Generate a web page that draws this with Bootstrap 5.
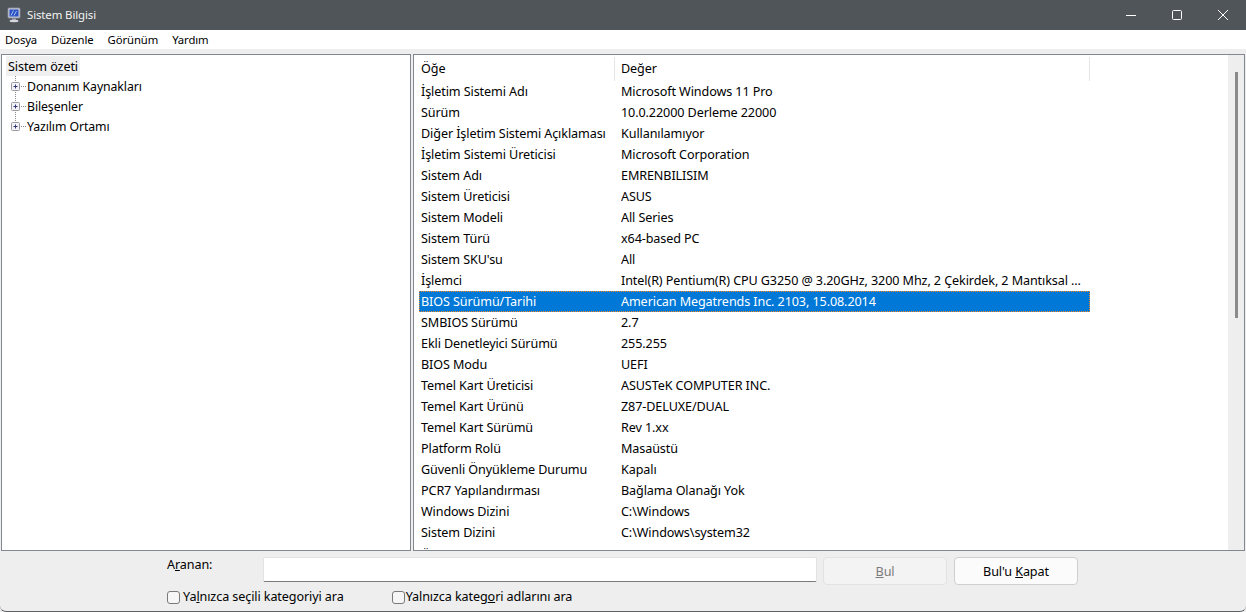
<!DOCTYPE html>
<html lang="tr"><head><meta charset="utf-8"><title>Sistem Bilgisi</title>
<link href="https://cdn.jsdelivr.net/npm/bootstrap@5.3.0/dist/css/bootstrap.min.css" rel="stylesheet">
<style>
html,body{height:612px;overflow:hidden}
body{font-family:"Noto Sans","Open Sans",sans-serif;font-size:12.6px;line-height:16px;color:#000;background:#eee;letter-spacing:-.1px}
.win{width:1246px;height:612px;display:flex;flex-direction:column;border-bottom:1px solid #5e6266;border-radius:0 0 6px 6px;overflow:hidden;background:#eee}
.tbar{height:30px;background:#4f5558;color:#fff;padding-left:7px;flex:none}
.tbar .ttl{margin-left:6px;color:#f4f4f4;font-size:11.4px}
.wbtn{width:46px;height:30px;display:flex;align-items:center;justify-content:center}
.mbar{height:19px;background:#fff;padding-left:5px;gap:14px;font-size:11.3px;flex:none}
.panes{height:497px;margin:5px 1px 0 1px;gap:2px;flex:none}
.pane{background:#fff;border:1px solid #828790;height:497px;overflow:hidden}
.ltree{width:410px;flex:none;padding:1px 0 0 4px}
.sel0{display:block;width:74px;background:#f0f0f0;padding:3px 0 1px 2px;line-height:16px;height:20px;white-space:nowrap}
.tnode{height:20px;display:flex;align-items:center;padding-left:5px;font-size:12.3px}
.tnode svg{flex:none}
.tnode span{padding-top:2px}
.rlist{flex:1;display:flex;position:relative}
.lcol{width:813px;flex:none;padding:1px 0 0 5px}
.hdr{height:25px;display:flex;align-items:center}
.hc1{width:196px;padding-left:2px;height:24px;line-height:24px;border-right:1px solid #e5e5e5}
.hc2{width:475px;padding-left:6px;height:24px;line-height:24px;border-right:1px solid #e5e5e5}
.rw{height:21px;width:671px;display:flex;line-height:21px;white-space:nowrap}
.rw>span:first-child{width:202px;padding-left:2px;flex:none}
.rw>span:last-child{flex:1;overflow:hidden;padding-right:5px}
.rw.on{background:#0078d7;color:#fff;outline:1px dotted #f58a1f;outline-offset:-1px}
.rw.cut{line-height:25px}
.sbar{width:16px;background:#eee;position:absolute;right:0;top:0;bottom:0}
.thumb{position:absolute;left:7px;top:17px;width:3px;height:246px;background:#8a8a8a}
.find{height:60px;position:relative;padding:6px 0 0 167px}
.flabel{width:96px;line-height:14px;padding-top:1px}
.finput{width:554px;height:25px;border:1px solid #e3e3e3;border-bottom-color:#7a7a7a;background:#fff;border-radius:2px;padding:0;box-shadow:none;flex:none}
.fbtn{width:124px;height:28px;padding:1px 0 0;font-size:12.6px;line-height:26px;border-radius:4px;color:#000;background:#fbfbfb;border:1px solid #cfcfcf;letter-spacing:-.1px}
.fbtn:disabled{background:#f3f3f3;border-color:#e2e2e2;color:#7b7b7b;opacity:1}
.fbul{margin-left:6px}
.fkapat{margin-left:7px}
.fchk{padding:0;margin:0;min-height:0;display:flex;align-items:center}
.fchk .form-check-input{float:none;margin:0 3px 0 0;width:13px;height:13px;border:1px solid #7a7a7a;border-radius:3px;background-color:#f6f6f6}
.fchk label{line-height:16px}
.fchk+.fchk label{margin-left:-2px}
.opts{margin-top:4px;gap:48px}
</style></head><body>
<div class="win">
<div class="tbar d-flex align-items-center">
<svg width="14" height="16" viewBox="0 0 14 16"><rect x="1" y="1" width="12" height="10" rx="1" fill="#c9ccd6" stroke="#8d90a6" stroke-width=".8"/><rect x="2.500" y="2.500" width="9" height="7" fill="#2a50c4"/><path d="M4 8.500 6.500 3.500M7 8.500 9.500 4" stroke="#a9c6f5" stroke-width="1"/><rect x="5" y="11.500" width="4" height="1.500" fill="#9a9da8"/><ellipse cx="7" cy="14" rx="4.500" ry="1.200" fill="#d6d8de"/></svg>
<span class="ttl">Sistem Bilgisi</span>
<div class="ms-auto d-flex">
<div class="wbtn"><svg width="10" height="10" viewBox="0 0 10 10"><path d="M0 5.500H10" stroke="#fff"/></svg></div>
<div class="wbtn"><svg width="10" height="10" viewBox="0 0 10 10"><rect x=".5" y=".5" width="9" height="9" rx="1" fill="none" stroke="#fff"/></svg></div>
<div class="wbtn"><svg width="10" height="10" viewBox="0 0 10 10"><path d="M0 0 10 10M10 0 0 10" stroke="#fff"/></svg></div>
</div></div>
<div class="mbar d-flex align-items-center"><span>Dosya</span><span>Düzenle</span><span>Görünüm</span><span>Yardım</span></div>
<div class="panes d-flex">
<div class="pane ltree">
<div class="sel0">Sistem özeti</div>
<div class="tnode"><svg width="16" height="20" viewBox="0 0 16 20"><path d="M4.500 0V20" stroke="#8a8a8a" stroke-dasharray="1 1"/><path d="M10 10.500H15" stroke="#8a8a8a" stroke-dasharray="1 1"/><rect x=".5" y="6.500" width="8" height="8" rx="1" fill="#f2f2f6" stroke="#9a9aa0"/><path d="M2.500 10.500H6.500M4.500 8.500V12.500" stroke="#33367a"/></svg><span>Donanım Kaynakları</span></div>
<div class="tnode"><svg width="16" height="20" viewBox="0 0 16 20"><path d="M4.500 0V20" stroke="#8a8a8a" stroke-dasharray="1 1"/><path d="M10 10.500H15" stroke="#8a8a8a" stroke-dasharray="1 1"/><rect x=".5" y="6.500" width="8" height="8" rx="1" fill="#f2f2f6" stroke="#9a9aa0"/><path d="M2.500 10.500H6.500M4.500 8.500V12.500" stroke="#33367a"/></svg><span>Bileşenler</span></div>
<div class="tnode"><svg width="16" height="20" viewBox="0 0 16 20"><path d="M4.500 0V7" stroke="#8a8a8a" stroke-dasharray="1 1"/><path d="M10 10.500H15" stroke="#8a8a8a" stroke-dasharray="1 1"/><rect x=".5" y="6.500" width="8" height="8" rx="1" fill="#f2f2f6" stroke="#9a9aa0"/><path d="M2.500 10.500H6.500M4.500 8.500V12.500" stroke="#33367a"/></svg><span>Yazılım Ortamı</span></div>
</div>
<div class="pane rlist">
<div class="lcol">
<div class="hdr"><div class="hc1">Öğe</div><div class="hc2">Değer</div></div>
<div class="rw"><span>İşletim Sistemi Adı</span><span>Microsoft Windows 11 Pro</span></div>
<div class="rw"><span>Sürüm</span><span>10.0.22000 Derleme 22000</span></div>
<div class="rw"><span>Diğer İşletim Sistemi Açıklaması</span><span>Kullanılamıyor</span></div>
<div class="rw"><span>İşletim Sistemi Üreticisi</span><span>Microsoft Corporation</span></div>
<div class="rw"><span>Sistem Adı</span><span>EMRENBILISIM</span></div>
<div class="rw"><span>Sistem Üreticisi</span><span>ASUS</span></div>
<div class="rw"><span>Sistem Modeli</span><span>All Series</span></div>
<div class="rw"><span>Sistem Türü</span><span>x64-based PC</span></div>
<div class="rw"><span>Sistem SKU'su</span><span>All</span></div>
<div class="rw"><span>İşlemci</span><span>Intel(R) Pentium(R) CPU G3250 @ 3.20GHz, 3200 Mhz, 2 Çekirdek, 2 Mantıksal ...</span></div>
<div class="rw on"><span>BIOS Sürümü/Tarihi</span><span>American Megatrends Inc. 2103, 15.08.2014</span></div>
<div class="rw"><span>SMBIOS Sürümü</span><span>2.7</span></div>
<div class="rw"><span>Ekli Denetleyici Sürümü</span><span>255.255</span></div>
<div class="rw"><span>BIOS Modu</span><span>UEFI</span></div>
<div class="rw"><span>Temel Kart Üreticisi</span><span>ASUSTeK COMPUTER INC.</span></div>
<div class="rw"><span>Temel Kart Ürünü</span><span>Z87-DELUXE/DUAL</span></div>
<div class="rw"><span>Temel Kart Sürümü</span><span>Rev 1.xx</span></div>
<div class="rw"><span>Platform Rolü</span><span>Masaüstü</span></div>
<div class="rw"><span>Güvenli Önyükleme Durumu</span><span>Kapalı</span></div>
<div class="rw"><span>PCR7 Yapılandırması</span><span>Bağlama Olanağı Yok</span></div>
<div class="rw"><span>Windows Dizini</span><span>C:\Windows</span></div>
<div class="rw"><span>Sistem Dizini</span><span>C:\Windows\system32</span></div>
<div class="rw cut"><span>Önyükleme Aygıtı</span><span>\Device\HarddiskVolume1</span></div>
</div>
<div class="sbar"><div class="thumb"></div></div>
</div></div>
<div class="find">
<div class="d-flex align-items-start">
<div class="flabel">A<u>r</u>anan:</div>
<input class="form-control finput" type="text" aria-label="Aranan">
<button class="btn fbtn fbul" disabled><u>B</u>ul</button>
<button class="btn fbtn fkapat">Bul'u <u>K</u>apat</button>
</div>
<div class="d-flex opts">
<div class="form-check fchk"><input class="form-check-input" type="checkbox" id="c1"><label for="c1">Ya<u>l</u>nızca seçili kategoriyi ara</label></div>
<div class="form-check fchk"><input class="form-check-input" type="checkbox" id="c2"><label for="c2">Yalnızca kateg<u>o</u>ri adlarını ara</label></div>
</div>
</div>
</div>
<script src="https://cdn.jsdelivr.net/npm/bootstrap@5.3.0/dist/js/bootstrap.bundle.min.js"></script>
</body></html>
